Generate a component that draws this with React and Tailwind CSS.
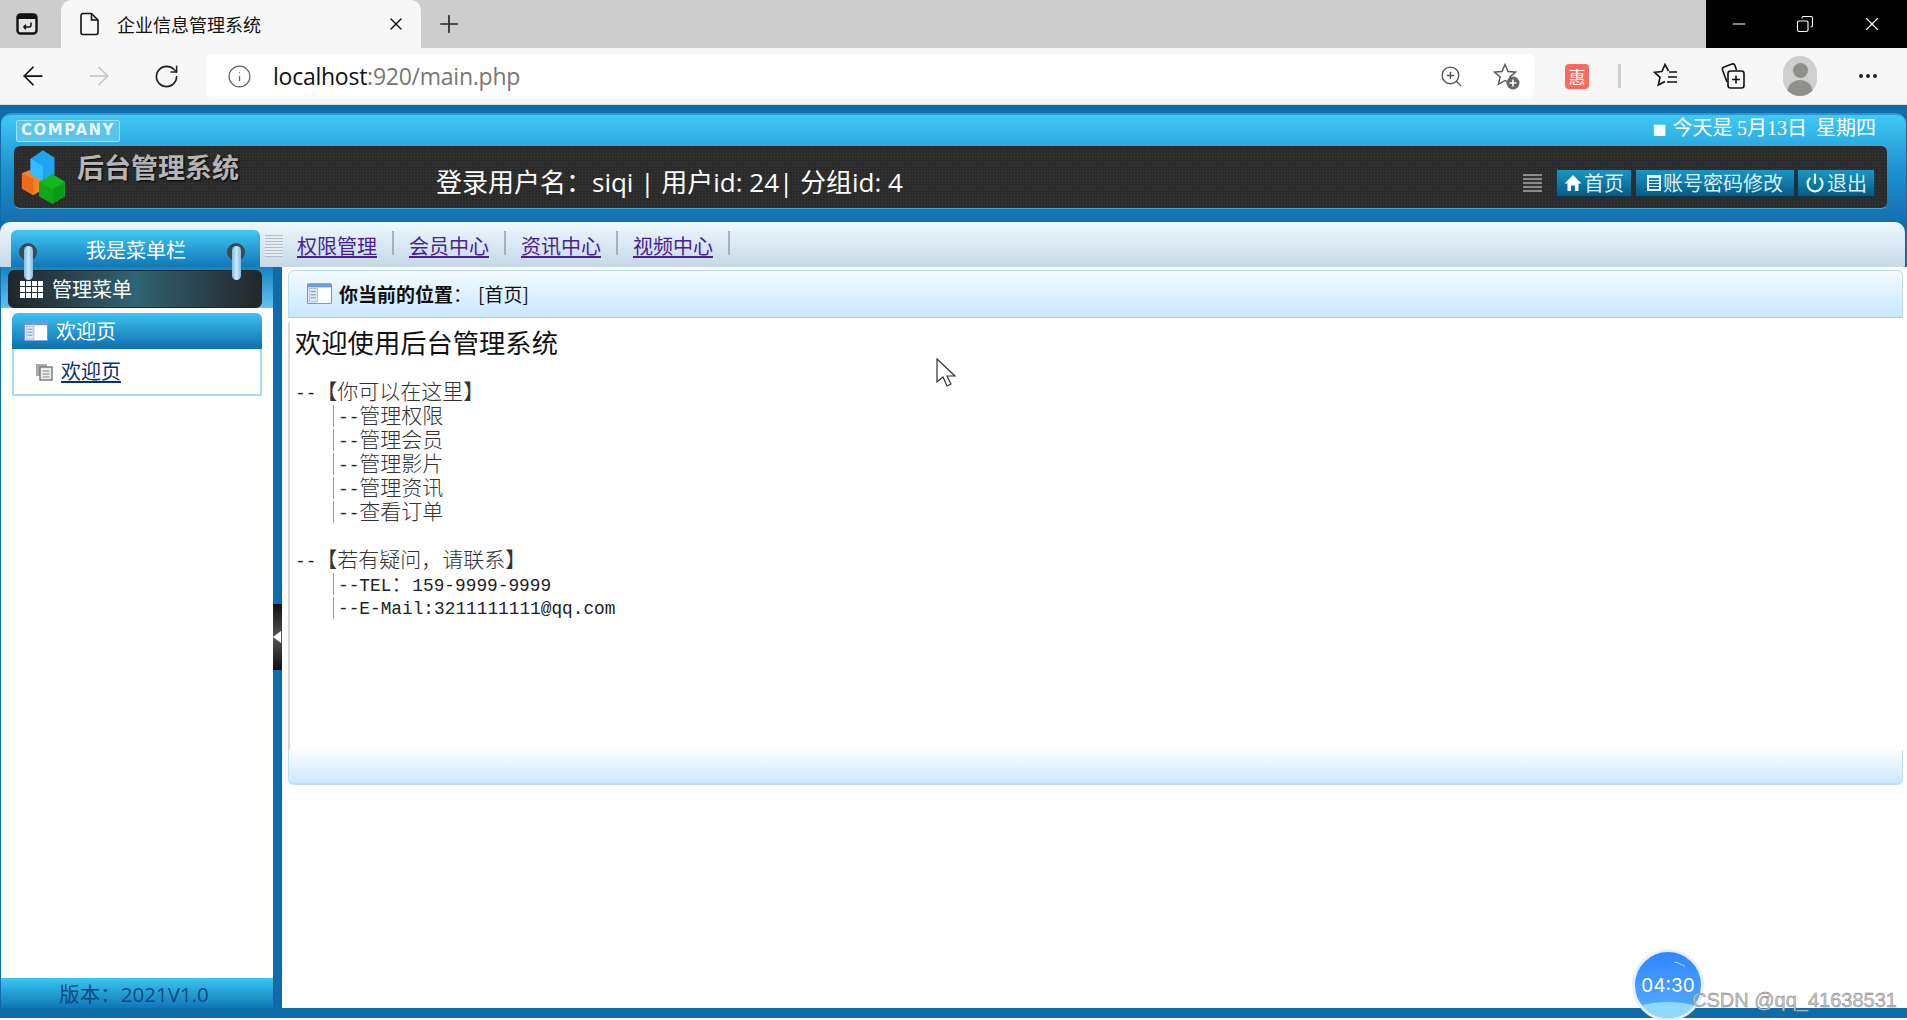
import { ArrowLeft, ArrowRight, RotateCw, Info, ZoomIn, Plus, X, Minus, Copy, Power, MoreHorizontal } from "lucide-react";

const sans = "font-['Open_Sans','Noto_Sans_CJK_SC',sans-serif]";
const cjk = "font-['Noto_Sans_CJK_SC',sans-serif]";

function DocIcon() {
  return (
    <svg width="20" height="24" viewBox="0 0 20 24" fill="none" stroke="#111" strokeWidth="1.6">
      <path d="M3 1.500h8.500L18 8v12.500a2 2 0 0 1-2 2H3a2 2 0 0 1-2-2v-17a2 2 0 0 1 2-2z" />
      <path d="M11.500 1.500V8H18" />
    </svg>
  );
}

function TabActionsIcon() {
  return (
    <svg width="22" height="22" viewBox="0 0 22 22" fill="none">
      <rect x="1.500" y="1.500" width="19" height="19" rx="3" fill="#e4e4e4" stroke="#111" strokeWidth="2.400" />
      <rect x="1.500" y="1.500" width="19" height="4.500" fill="#111" />
      <path d="M15 9.500v2.500a2 2 0 0 1-2 2H7.500M7.500 14l2.500-2.300M7.500 14l2.500 2.300" stroke="#111" strokeWidth="1.500" />
    </svg>
  );
}

function FavAddIcon() {
  return (
    <svg width="28" height="28" viewBox="0 0 28 28" fill="none">
      <path d="M12 2.500l3 7 7.500.6-5.700 4.900 1.800 7.300L12 18.500l-6.600 3.800 1.800-7.300L1.500 10.100l7.500-.6z" stroke="#555" strokeWidth="1.400" />
      <circle cx="20" cy="21" r="6.500" fill="#666" />
      <path d="M20 17.500v7M16.500 21h7" stroke="#fff" strokeWidth="1.600" />
    </svg>
  );
}

function FavListIcon() {
  return (
    <svg width="26" height="26" viewBox="0 0 26 26" fill="none" stroke="#111" strokeWidth="1.600">
      <path d="M15.500 8L12 1.500 9 8.500l-7.500.8 5.500 5-1.700 7.700L12 18.500" />
      <path d="M16 9h8M15 14h9M14 19h10" />
    </svg>
  );
}

function CollectionsIcon() {
  return (
    <svg width="26" height="28" viewBox="0 0 26 28" fill="none" stroke="#111" strokeWidth="1.600">
      <path d="M7 20L2.500 8a2.500 2.500 0 0 1 1.500-3L12 2a2.500 2.500 0 0 1 3 1.500L16.500 8" />
      <rect x="8" y="9" width="16" height="17" rx="2.500" />
      <path d="M16 13.500v8M12 17.500h8" />
    </svg>
  );
}

function Avatar() {
  return (
    <div className="w-[34px] h-[40px] rounded-full bg-[#cfcfcd] overflow-hidden flex flex-col items-center">
      <div className="w-[15px] h-[19px] rounded-full bg-[#8f8f8d] mt-[7px]" />
      <div className="w-[26px] h-[20px] rounded-t-full bg-[#8f8f8d] mt-[2px]" />
    </div>
  );
}

function BrowserChrome() {
  return (
    <>
      <div className="h-[48px] bg-[#cdcdcd] flex items-stretch">
        <div className="w-[61px] flex items-center pl-[16px]">
          <TabActionsIcon />
        </div>
        <div className="w-[360px] bg-[#f7f7f7] rounded-t-[10px] flex items-center pl-[19px] pr-[15px]">
          <DocIcon />
          <span className={`ml-[17px] text-[18px] text-[#111] ${cjk}`}>企业信息管理系统</span>
          <X className="ml-auto" size={20} strokeWidth={1.600} color="#111" />
        </div>
        <div className="flex items-center ml-[14px]">
          <Plus size={28} strokeWidth={1.400} color="#222" />
        </div>
        <div className="ml-auto w-[201px] bg-black flex items-center text-white">
          <Minus className="ml-[23px]" size={20} strokeWidth={1.300} />
          <Copy className="ml-[47px] -scale-x-100" size={18} strokeWidth={1.500} />
          <X className="ml-[47px]" size={22} strokeWidth={1.200} />
        </div>
      </div>
      <div className="h-[57px] bg-[#f7f7f7] flex items-center border-b border-[#dcdcdc]">
        <ArrowLeft className="ml-[18px]" size={30} strokeWidth={1.400} color="#111" />
        <ArrowRight className="ml-[36px]" size={30} strokeWidth={1.300} color="#c4c4c4" />
        <RotateCw className="ml-[39px]" size={27} strokeWidth={1.400} color="#222" />
        <div className="ml-[26px] w-[1328px] h-[45px] bg-white rounded-md flex items-center">
          <Info className="ml-[21px]" size={25} strokeWidth={1.200} color="#666" />
          <span className="ml-[21px] text-[23px] text-[#777] font-['Open_Sans',sans-serif] tracking-[-0.25px]">
            <span className="text-[#111]">localhost</span>:920/main.php
          </span>
          <ZoomIn className="ml-auto" size={25} strokeWidth={1.300} color="#555" />
          <div className="ml-[29px] mr-[13px]">
            <FavAddIcon />
          </div>
        </div>
        <div className={`ml-[31px] w-[24px] h-[25px] rounded-[4px] bg-[#fb6a5f] text-white text-[17px] leading-[25px] text-center ${cjk}`}>惠</div>
        <div className="ml-[29px] w-[3px] h-[24px] bg-[#cfcfcf]" />
        <div className="ml-[32px]">
          <FavListIcon />
        </div>
        <div className="ml-[41px]">
          <CollectionsIcon />
        </div>
        <div className="ml-[37px]">
          <Avatar />
        </div>
        <MoreHorizontal className="ml-[39px]" size={24} strokeWidth={2} color="#222" />
      </div>
    </>
  );
}

function CubesLogo() {
  return (
    <svg width="46" height="54" viewBox="0 0 48 56" className="shrink-0">
      <path d="M2 24l12-5 11 6v15l-11 7-12-7z" fill="#f6842a" />
      <path d="M2 24l12 6v17l-12-7z" fill="#ef6a14" />
      <path d="M11 9l13-9 12 8v17l-12 8-13-8z" fill="#1ea4f2" />
      <path d="M11 9l13 8v16l-13-8z" fill="#38bcff" />
      <path d="M20 33l14-8 13 8v15l-13 8-14-8z" fill="#15b71f" />
      <path d="M34 41l13-8v15l-13 8z" fill="#0c9a18" />
      <path d="M20 33l14 8v15l-14-8z" fill="#0fa61a" />
    </svg>
  );
}

function TopButton({ children, className }) {
  return (
    <div className={`mt-[11px] h-[28px] flex items-center justify-center gap-[2px] border border-[#0b3a55] bg-gradient-to-b from-[#1a95c0] via-[#0f7ba6] to-[#075a80] text-[#d9eef5] text-[20px] leading-none ${cjk} ${className}`}>
      {children}
    </div>
  );
}

function Header() {
  return (
    <div className="h-[117px] bg-[#0f6cab] pt-[8px]">
      <div className="h-[109px] mx-[1px] rounded-t-[10px] bg-gradient-to-b from-[#40c9f4] via-[#1d93d2] to-[#146fb0] border-t-2 border-[#2a97d4]">
        <div className="h-[31px] flex items-center pl-[15px] pr-[30px]">
          <div className="w-[104px] h-[22px] rounded-[2px] border border-[#9fe0f7] bg-[#5cc3ea] flex items-center justify-center text-[15px] font-bold text-[#e8f7fc] tracking-[1.500px] font-['DejaVu_Sans',sans-serif]">
            COMPANY
          </div>
          <span className={`ml-auto mb-[7px] text-[20px] text-white leading-none ${cjk}`}>
            <span className="text-[14px] mr-[6px]">■</span>今天是 <span className="font-['Liberation_Serif',serif]">5</span>月<span className="font-['Liberation_Serif',serif]">13</span>日&nbsp; 星期四
          </span>
        </div>
        <div className="h-[63px] ml-[13px] mr-[19px] rounded-md border-b border-[#4aa6cf] bg-[#2b2b2b] bg-[radial-gradient(#3a3a3a_1px,transparent_1px)] bg-[length:3px_3px] flex items-center pl-[6px] pr-[12px]">
          <CubesLogo />
          <span className={`ml-[11px] mb-[22px] text-[27px] font-bold text-[#b4b4b4] leading-none [text-shadow:1px_1px_2px_#000] ${cjk}`}>后台管理系统</span>
          <span className={`ml-[197px] mt-[9px] text-[26px] text-white leading-none ${sans}`}>
            登录用户名：siqi | 用户id: 24| 分组id: 4
          </span>
          <div className="ml-auto mt-[11px] mr-[14px] w-[19px] h-[18px] bg-[repeating-linear-gradient(#8a8a8a_0_2px,#333_2px_4px)]" />
          <TopButton className="w-[76px]">
            <svg width="18" height="18" viewBox="0 0 18 18" fill="#fff">
              <path d="M9 1L0.500 9.500H3.500V17H7V11.500H11V17H14.500V9.500H17.500z" />
            </svg>
            首页
          </TopButton>
          <TopButton className="w-[160px] ml-[3px]">
            <span className="w-[14px] h-[16px] border-2 border-[#e6f4f8] bg-[repeating-linear-gradient(#e6f4f8_0_1px,transparent_1px_3px)]" />
            账号密码修改
          </TopButton>
          <TopButton className="w-[78px] ml-[2px]">
            <Power size={20} strokeWidth={2.600} color="#e6f4f8" />
            退出
          </TopButton>
        </div>
      </div>
    </div>
  );
}

function Ring({ className }) {
  return (
    <div className={`absolute z-10 top-[13px] w-[18px] flex flex-col items-center ${className}`}>
      <div className="w-[18px] h-[18px] rounded-full bg-[#3c4a52]" />
      <div className="-mt-[15px] w-[9px] h-[34px] rounded-full bg-gradient-to-r from-[#7db9e6] via-[#cfe9fb] to-[#7db9e6]" />
    </div>
  );
}

function NavBar() {
  const links = ["权限管理", "会员中心", "资讯中心", "视频中心"];
  return (
    <div className="h-[45px] bg-[#0f6cab]">
      <div className="h-[45px] mr-[2px] rounded-t-[10px] bg-gradient-to-b from-[#eef8fe] to-[#c6d9e8] flex items-end pl-[11px]">
        <div className={`relative w-[249px] h-[37px] rounded-t-md bg-gradient-to-b from-[#40c9f4] to-[#1277b6] text-white text-[20px] leading-[40px] pl-[75px] ${cjk}`}>
          我是菜单栏
          <Ring className="left-[8px]" />
          <Ring className="left-[216px]" />
        </div>
        <div className="ml-[5px] mb-[10px] w-[18px] h-[22px] bg-[repeating-linear-gradient(#b5bec6_0_1px,#e6edf3_1px_3px)]" />
        <div className={`flex items-center h-full pt-[2px] pl-[14px] text-[20px] text-[#4a1f8f] ${cjk}`}>
          {links.map((l) => (
            <div key={l} className="flex items-center">
              <a className="underline underline-offset-2 w-[80px]">{l}</a>
              <span className="mx-[15px] w-[2px] h-[24px] mb-[6px] bg-[#9fb3c4]" />
            </div>
          ))}
        </div>
      </div>
    </div>
  );
}

function ColumnsIcon({ size = 24 }) {
  return (
    <svg width={size} height={size * 0.85} viewBox="0 0 24 20">
      <rect x="0.500" y="0.500" width="23" height="19" rx="1" fill="#fff" stroke="#6c9bd8" />
      <rect x="0.500" y="0.500" width="23" height="3.500" fill="#6c9bd8" />
      <rect x="2" y="5" width="8" height="13" fill="#dbe8f6" stroke="#8aa8cc" strokeWidth="0.600" />
      <path d="M3.500 8h5M3.500 11h5M3.500 14h5" stroke="#7a98bc" />
    </svg>
  );
}

function Sidebar() {
  return (
    <div className="w-[273px] shrink-0 border-l border-[#0f6cab] bg-white flex flex-col">
      <div className="h-[41px] bg-gradient-to-b from-[#1582c4] to-[#5ec4ec] pt-[3px] pl-[7px]">
        <div className={`w-[254px] h-[38px] rounded-md border border-[#1c2a30] bg-gradient-to-r from-[#20262b] via-[#2f6474] to-[#22272b] flex items-center text-white text-[20px] ${cjk}`}>
          <div className="ml-[11px] grid grid-cols-4 gap-[1px]">
            {Array.from({ length: 12 }).map((_, i) => (
              <span key={i} className="w-[5px] h-[5px] bg-white" />
            ))}
          </div>
          <span className="ml-[9px]">管理菜单</span>
        </div>
      </div>
      <div className="mt-[5px] ml-[11px] w-[250px]">
        <div className={`h-[36px] rounded-t-md bg-gradient-to-b from-[#3cc3f0] to-[#0f6fae] flex items-center pl-[12px] text-white text-[20px] ${cjk}`}>
          <ColumnsIcon />
          <span className="ml-[8px]">欢迎页</span>
        </div>
        <div className={`h-[47px] border-2 border-t-0 border-[#a9dbe8] flex items-center pl-[21px] text-[20px] text-[#0b2f78] ${cjk}`}>
          <svg width="18" height="18" viewBox="0 0 18 18">
            <rect x="1" y="1" width="11" height="12" fill="#aaa" />
            <rect x="5" y="4" width="12" height="13" fill="#eee" stroke="#777" strokeWidth="1.400" />
            <path d="M7.500 8h7M7.500 11h7M7.500 14h7" stroke="#888" />
          </svg>
          <a className="ml-[8px] mb-[2px] underline underline-offset-2">欢迎页</a>
        </div>
      </div>
      <div className={`mt-auto h-[30px] bg-gradient-to-b from-[#3cc6f1] to-[#1176b6] text-[#0b4a80] text-[20.500px] leading-[33px] text-center pr-[6px] ${sans}`}>
        版本：2021V1.0
      </div>
    </div>
  );
}

function Splitter() {
  return (
    <div className="relative w-[9px] shrink-0 bg-[#0f6cab]">
      <div className="absolute left-0 top-[337px] w-[9px] h-[66px] bg-gradient-to-b from-[#111] via-[#555] to-[#111] flex items-center">
        <div className="w-0 h-0 border-y-[6px] border-y-transparent border-r-[8px] border-r-white" />
      </div>
    </div>
  );
}

// 宋体 style preformatted lines, latin narrower than the cjk cells
function Cn({ children }) {
  return <span className={`text-[21px] text-[#333] ${cjk} font-light`}>{children}</span>;
}

function Lat({ children }) {
  return <span className="text-[17.800px] text-[#222] font-['Liberation_Mono',monospace]">{children}</span>;
}

function Line({ indent, children }) {
  return (
    <div className="h-[24px] flex items-center whitespace-pre leading-[24px]">
      {indent && <span className="w-[1px] h-[22px] bg-[#999] ml-[38px] mr-[4px]" />}
      <div>{children}</div>
    </div>
  );
}

function Content() {
  return (
    <div className="flex-1 bg-white pl-[6px] pr-[4px] pt-[3px]">
      <div className={`h-[48px] rounded-t-md border border-[#bfdcf0] border-b-[#a8d0ea] bg-gradient-to-b from-[#f4fbff] to-[#c9e7fd] flex items-center pl-[18px] text-[19px] text-[#111] ${cjk}`}>
        <ColumnsIcon size={25} />
        <span className="ml-[7px] font-bold">你当前的位置</span>：<span className="ml-[6px]">[首页]</span>
      </div>
      <div className="mt-[4px] h-[428px] border-l-2 border-[#d8d8d8] pl-[5px] pt-[1px]">
        <div className={`text-[26.300px] leading-[38px] text-[#111] mb-[19px] ${cjk}`}>欢迎使用后台管理系统</div>
        <Line><Lat>--</Lat><Cn>【你可以在这里】</Cn></Line>
        <Line indent><Lat>--</Lat><Cn>管理权限</Cn></Line>
        <Line indent><Lat>--</Lat><Cn>管理会员</Cn></Line>
        <Line indent><Lat>--</Lat><Cn>管理影片</Cn></Line>
        <Line indent><Lat>--</Lat><Cn>管理资讯</Cn></Line>
        <Line indent><Lat>--</Lat><Cn>查看订单</Cn></Line>
        <Line> </Line>
        <Line><Lat>--</Lat><Cn>【若有疑问，请联系】</Cn></Line>
        <Line indent><Lat>--TEL</Lat><Cn>：</Cn><Lat>159-9999-9999</Lat></Line>
        <Line indent><Lat>--E-Mail:3211111111@qq.com</Lat></Line>
      </div>
      <div className="h-[35px] rounded-b-md border-b-2 border-x border-[#c3ddf0] bg-gradient-to-b from-[#fbfdff] to-[#cbe8fd]" />
    </div>
  );
}

function Timer() {
  return (
    <div className="absolute left-[1632px] top-[949px] w-[72px] h-[72px] rounded-full border-[3px] border-[#e4f0fa] bg-gradient-to-b from-[#2f86fb] to-[#56aeff] overflow-hidden flex items-center justify-center">
      <span className="text-white text-[19px] font-['Inter',sans-serif] leading-none">04:30</span>
      <div className="absolute left-[-6px] right-[-6px] bottom-[-12px] h-[28px] rounded-[50%] bg-[#8fd8ff]" />
      <div className="absolute right-[16px] top-[11px] w-[12px] h-[5px] rounded-full border-t border-white/80 rotate-[25deg]" />
    </div>
  );
}

function Cursor() {
  return (
    <svg className="absolute left-[936px] top-[358px]" width="20" height="30" viewBox="0 0 20 30">
      <path d="M1 1v23l6-5 4 9 4-2-4-8h8z" fill="#fff" stroke="#333" strokeWidth="1.200" />
    </svg>
  );
}

function App() {
  return (
    <div className="relative w-[1907px] h-[1020px] overflow-hidden bg-white">
      <BrowserChrome />
      <Header />
      <NavBar />
      <div className="h-[741px] flex">
        <Sidebar />
        <Splitter />
        <Content />
      </div>
      <div className="h-[10px] bg-[#0f6cab]" />
      <Cursor />
      <Timer />
      <div className="absolute left-[1692px] top-[986px] whitespace-nowrap text-[20px] leading-[28px] text-[#c9c9c9] [-webkit-text-stroke:0.4px_#777] font-['Liberation_Sans',sans-serif]">
        CSDN @qq_41638531
      </div>
    </div>
  );
}

export default App;
